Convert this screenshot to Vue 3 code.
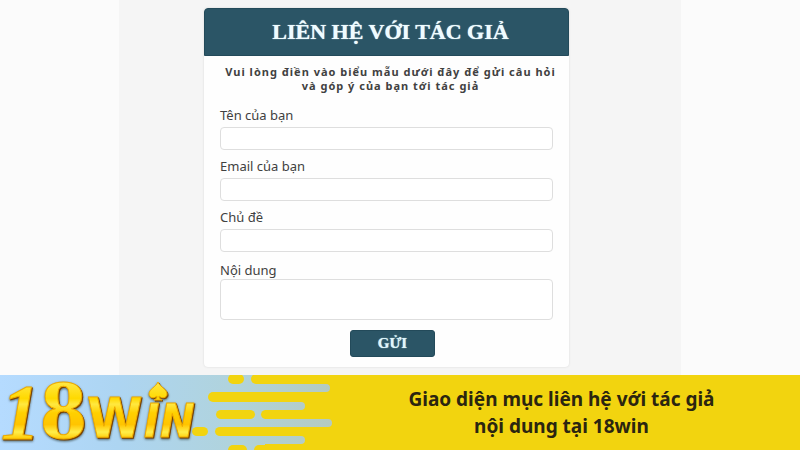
<template>
  <div class="contact-page">

    <main class="stage">
      <div class="paper">
        <form class="card" @submit.prevent>
          <h1 class="card-title">LIÊN HỆ VỚI TÁC GIẢ</h1>

          <div class="card-body">
            <p class="intro">Vui lòng điền vào biểu mẫu dưới đây để gửi câu hỏi và góp ý của bạn tới tác giả</p>

            <div v-for="field in fields" :key="field.id" class="field">
              <label :for="field.id">{{ field.label }}</label>
              <input :id="field.id" v-model="form[field.id]" :type="field.type" />
            </div>

            <div class="field field-message">
              <label for="message">Nội dung</label>
              <textarea id="message" v-model="form.message"></textarea>
            </div>

            <button class="send-btn" type="submit">GỬI</button>
          </div>
        </form>
      </div>
    </main>

    <footer class="banner">
      <svg class="banner-art" viewBox="0 0 345 75" width="345" height="75">
        <defs>
          <linearGradient id="sky" gradientUnits="userSpaceOnUse" x1="0" y1="0" x2="335" y2="0">
            <stop offset="0" stop-color="#b5dbff" />
            <stop offset="0.35" stop-color="#add5f2" />
            <stop offset="0.7" stop-color="#b0d3dc" />
            <stop offset="1" stop-color="#b4cac0" />
          </linearGradient>
          <linearGradient id="gold" gradientUnits="userSpaceOnUse" x1="0" y1="6" x2="0" y2="64">
            <stop offset="0" stop-color="#ffe94a" />
            <stop offset="0.3" stop-color="#ffd900" />
            <stop offset="0.4" stop-color="#ffe840" />
            <stop offset="0.55" stop-color="#ffd000" />
            <stop offset="0.75" stop-color="#ffc400" />
            <stop offset="0.88" stop-color="#ffee4a" />
            <stop offset="1" stop-color="#ffc800" />
          </linearGradient>
        </defs>

        <!-- sky and stripes -->
        <rect width="265" height="75" fill="url(#sky)" />
        <rect
          v-for="(s, i) in skyBars" :key="'s' + i"
          x="230" :y="s.y" :width="s.end - 230" height="8" rx="4" fill="url(#sky)"
        />
        <rect
          v-for="(b, i) in yellowBars" :key="'y' + i"
          :x="b.x" :y="b.y" :width="b.end - b.x" :height="b.h" rx="5" fill="#f2d40f"
        />

        <!-- logo -->
        <g class="logo">
          <text class="one" x="1" y="63">1</text>
          <text class="eight" x="40" y="63">8</text>
          <text class="big-letter" x="87" y="62">W</text>
          <text class="letter" x="144" y="62">I</text>
          <text class="letter" x="160" y="62">N</text>
          <path d="M158 7 C156 12 149 14 149 19 C149 23 154 24 157 21 C157 23 156 24 154 25 H162 C160 24 159 23 159 21 C162 24 167 23 167 19 C167 14 160 12 158 7 Z" />
        </g>
      </svg>

      <p class="banner-text">Giao diện mục liên hệ với tác giả<br />nội dung tại 18win</p>
    </footer>

  </div>
</template>

<script setup>
import { reactive } from 'vue'

const form = reactive({ name: '', email: '', subject: '', message: '' })

const fields = [
  { id: 'name', label: 'Tên của bạn', type: 'text' },
  { id: 'email', label: 'Email của bạn', type: 'email' },
  { id: 'subject', label: 'Chủ đề', type: 'text' }
]

const skyBars = [
  { y: 9, end: 330 },
  { y: 27, end: 305 },
  { y: 44, end: 332 },
  { y: 61, end: 305 }
]

const yellowBars = [
  { x: 228, y: -1, end: 244, h: 10 },
  { x: 251, y: -1, end: 355, h: 10 },
  { x: 208, y: 17, end: 355, h: 10 },
  { x: 216, y: 35, end: 255, h: 9 },
  { x: 261, y: 35, end: 355, h: 9 },
  { x: 192, y: 52, end: 208, h: 9 },
  { x: 215, y: 52, end: 355, h: 9 },
  { x: 228, y: 70, end: 247, h: 10 },
  { x: 254, y: 70, end: 355, h: 10 }
]
</script>

<style>
body {
  margin: 0;
  background: #fbfbfb;
}
</style>

<style scoped>
.contact-page {
  min-height: 100vh;
  display: flex;
  flex-direction: column;
  font-family: "Noto Sans", sans-serif;
  color: #414141;
}

.stage {
  flex: 1;
  display: flex;
  justify-content: center;
}

.paper {
  box-sizing: border-box;
  width: 100%;
  max-width: 562px;
  padding: 8px 112px 8px 85px;
  background: #f5f5f5;
}

/* FORM */
.card {
  border-radius: 4px;
  background: #fefefe;
  box-shadow: 0 0 2px #d4d4d4;
}

.card-title {
  margin: 0;
  border-radius: 4px 4px 0 0;
  border: 1px solid #234a5a;
  background: #2b5566;
  color: #effcff;
  font: bold 22px/46px "Liberation Serif", serif;
  text-align: center;
  text-shadow: 0 0 1px #effcff;
  padding-left: 8px;
}

.card-body {
  display: flex;
  flex-direction: column;
  padding: 9px 16px 10px;
}

.intro {
  margin: 0 -12px 13px -4px;
  font-size: 11px;
  font-weight: bold;
  line-height: 14px;
  letter-spacing: 1px;
  text-align: center;
}

.field {
  display: flex;
  flex-direction: column;
  gap: 3px;
  margin-bottom: 7px;
}

.field label {
  font-size: 13px;
  line-height: 18px;
}

.field input,
.field textarea {
  box-sizing: border-box;
  width: 100%;
  height: 23px;
  border: 1px solid #dedede;
  border-radius: 4px;
  background: #fff;
  font: inherit;
  font-size: 13px;
  resize: none;
}

.field textarea {
  height: 41px;
}

.field-message {
  gap: 0;
  margin: 2px 0 10px;
}

.send-btn {
  align-self: center;
  width: 85px;
  height: 27px;
  margin-left: 12px;
  padding: 0;
  border: 1px solid #234a5a;
  border-radius: 3px;
  background: #2b5566;
  color: #dff6fb;
  font: bold 15px "Liberation Serif", serif;
  text-shadow: 0 0 1px #dff6fb;
}

/* BANNER */
.banner {
  display: flex;
  align-items: center;
  min-height: 75px;
  background: #f2d40f;
}

.banner-art {
  flex: none;
  display: block;
}

.logo {
  fill: url(#gold);
  stroke: #f0ac00;
  stroke-width: 1;
  filter: drop-shadow(1px 1px 0 #7a4300) drop-shadow(0 1px 1px #54696f);
}

.one {
  font: italic bold 78px "Liberation Serif", serif;
}

.eight {
  font: bold 75px "DejaVu Serif Condensed", "DejaVu Serif", serif;
}

.big-letter {
  font: bold 56px "DejaVu Sans Condensed", "DejaVu Sans", sans-serif;
}

.letter {
  font: italic bold 46px "DejaVu Sans Condensed", "DejaVu Sans", sans-serif;
}

.banner-text {
  flex: 1;
  margin: 0;
  padding-right: 22px;
  color: #2b2510;
  font-size: 19px;
  font-weight: bold;
  line-height: 27px;
  text-align: center;
}
</style>
